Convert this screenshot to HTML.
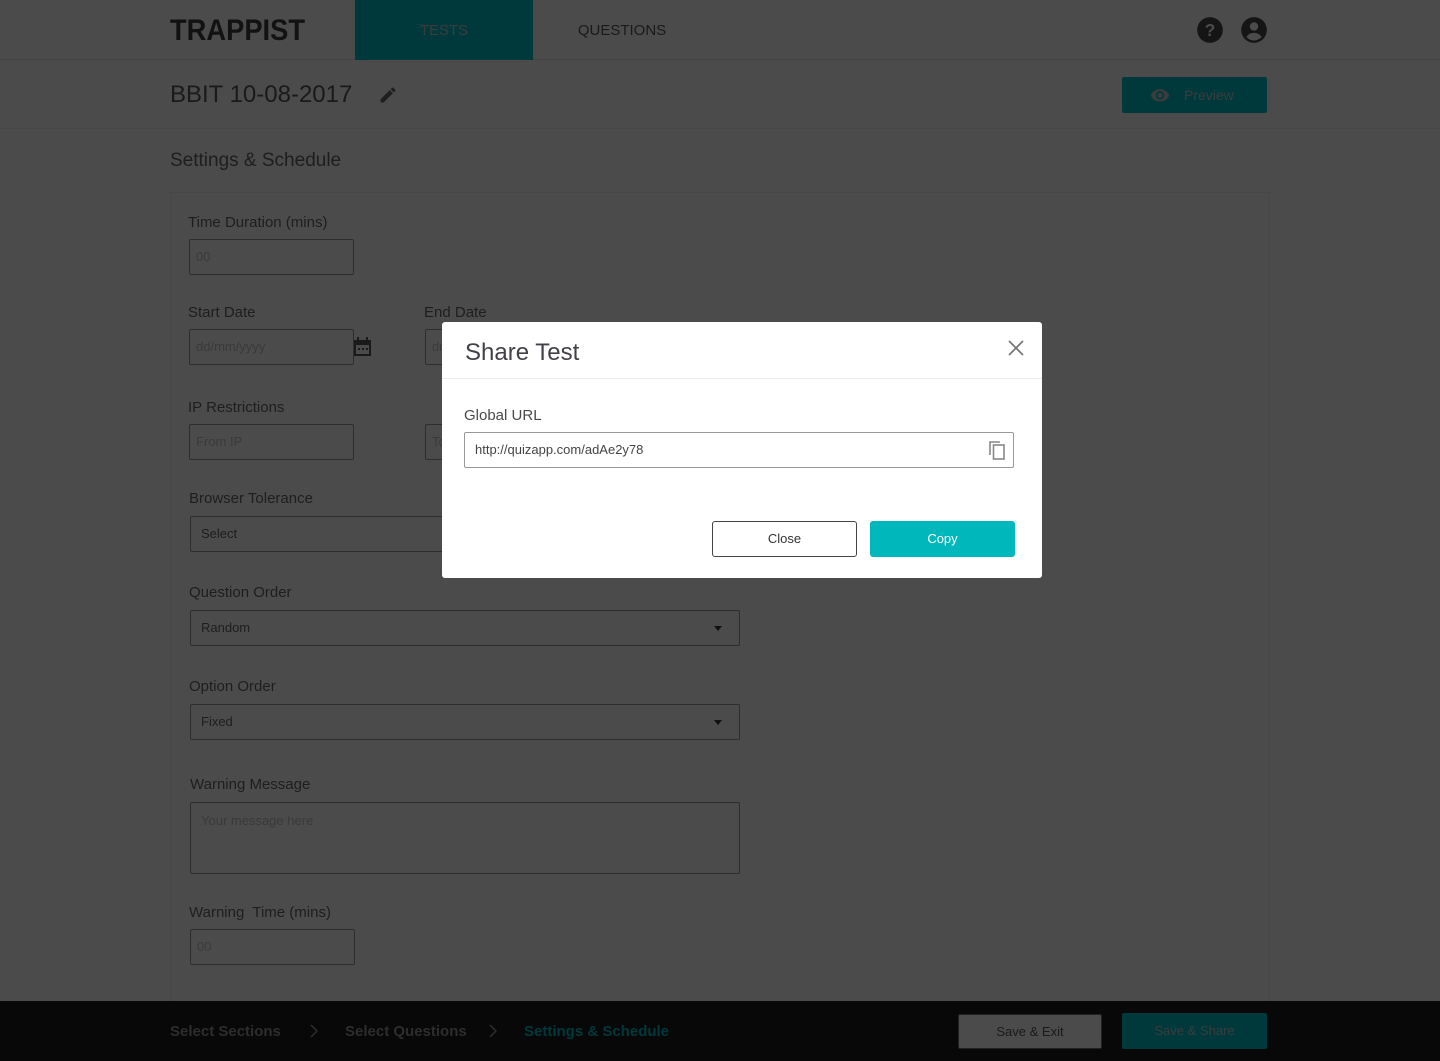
<!DOCTYPE html>
<html><head><meta charset="utf-8"><style>
*{box-sizing:border-box;margin:0;padding:0}
body{width:1440px;height:1061px;background:#4b4b4b;font-family:"Liberation Sans",sans-serif;position:relative;overflow:hidden;color:#1e1e1e}
.a{position:absolute}
.hdr{left:0;top:0;width:1440px;height:60px;border-bottom:1px solid #434343}
.logo{left:170px;top:14px;font-size:30px;font-weight:bold;color:#121212;transform:scaleX(0.91);transform-origin:left}
.tab{top:0;height:60px;line-height:62px;text-align:center;font-size:15px}
.lbl{font-size:15px;color:#1e1e1e;margin-top:2px}
.inp{border:1px solid #2e2e2e;border-radius:2px;height:36px;font-size:13px;color:#3a3a3a;padding-left:6px;line-height:34px}
.sel{border:1px solid #2e2e2e;border-radius:2px;height:36px;font-size:13px;color:#1e1e1e;padding-left:10px;line-height:34px;width:550px}
.sel:after{content:"";position:absolute;right:17px;top:15px;border:4px solid transparent;border-top:5px solid #111}
.modal{left:442px;top:322px;width:600px;height:256px;background:#fff;border-radius:3px}
.bc{top:1023px;font-size:15px;font-weight:bold;color:#2d2d2d}
</style></head><body>
<div class="a hdr"></div>
<div class="a logo">TRAPPIST</div>
<div class="a tab" style="left:355px;width:178px;background:#00393b;color:#3c3c3c">TESTS</div>
<div class="a tab" style="left:533px;width:178px;color:#1a1a1a">QUESTIONS</div>
<svg class="a" style="left:1196px;top:16px" width="28" height="28" viewBox="0 0 24 24"><circle cx="12" cy="12" r="11" fill="#151515"/><text x="12" y="17" text-anchor="middle" font-size="15" font-weight="bold" fill="#4b4b4b" font-family="Liberation Sans">?</text></svg>
<svg class="a" style="left:1240px;top:16px" width="28" height="28" viewBox="0 0 24 24"><circle cx="12" cy="12" r="11" fill="#151515"/><circle cx="12" cy="9" r="3.6" fill="#4b4b4b"/><path d="M5.5 18c1.5-2.5 4-3.5 6.5-3.5s5 1 6.5 3.5c-1.6 1.8-4 3-6.5 3s-4.9-1.2-6.5-3z" fill="#4b4b4b"/></svg>
<div class="a" style="left:0;top:128px;width:1440px;height:1px;background:#474747"></div>
<div class="a" style="left:170px;top:81px;font-size:24px;color:#1a1a1a">BBIT 10-08-2017</div>
<svg class="a" style="left:378px;top:85px" width="20" height="20" viewBox="0 0 24 24"><path d="M3 17.25V21h3.75L17.8 9.940l-3.75-3.75L3 17.25zM20.7 7.04a1 1 0 000-1.41l-2.34-2.34a1 1 0 00-1.41 0l-1.83 1.830 3.75 3.75 1.83-1.83z" fill="#1f1f1f"/></svg>
<div class="a" style="left:1122px;top:77px;width:145px;height:36px;background:#00393b;border-radius:2px"></div>
<svg class="a" style="left:1150px;top:87px" width="20" height="16" viewBox="0 0 24 18"><path d="M12 2C7 2 2.7 5.1 1 9.5 2.7 13.9 7 17 12 17s9.3-3.1 11-7.5C21.3 5.1 17 2 12 2zm0 12.5a5 5 0 110-10 5 5 0 010 10zm0-8a3 3 0 100 6 3 3 0 000-6z" fill="#3c3c3c"/></svg>
<div class="a" style="left:1184px;top:87px;font-size:14px;color:#3c3c3c">Preview</div>
<div class="a" style="left:170px;top:150px;font-size:19px;color:#1e1e1e">Settings &amp; Schedule</div>
<div class="a" style="left:170px;top:192px;width:1100px;height:830px;border:1px solid #474747"></div>
<div class="a lbl" style="left:188px;top:212px">Time Duration (mins)</div>
<div class="a inp" style="left:189px;top:239px;width:165px">00</div>
<div class="a lbl" style="left:188px;top:302px">Start Date</div>
<div class="a inp" style="left:189px;top:329px;width:165px">dd/mm/yyyy</div>
<svg class="a" style="left:353px;top:337px" width="19" height="20" viewBox="0 0 19 20"><rect x="1" y="3" width="17" height="16" fill="#1a1a1a"/><rect x="3" y="8" width="13" height="9" fill="#4b4b4b"/><rect x="4" y="0" width="2" height="4" fill="#1a1a1a"/><rect x="13" y="0" width="2" height="4" fill="#1a1a1a"/><rect x="5" y="11" width="2" height="2" fill="#1a1a1a"/><rect x="9" y="11" width="2" height="2" fill="#1a1a1a"/><rect x="13" y="11" width="2" height="2" fill="#1a1a1a"/></svg>
<div class="a lbl" style="left:424px;top:302px">End Date</div>
<div class="a inp" style="left:425px;top:329px;width:165px">dd</div>
<div class="a lbl" style="left:188px;top:397px">IP Restrictions</div>
<div class="a inp" style="left:189px;top:424px;width:165px">From IP</div>
<div class="a inp" style="left:425px;top:424px;width:165px">To</div>
<div class="a lbl" style="left:189px;top:488px">Browser Tolerance</div>
<div class="a sel" style="left:190px;top:516px">Select</div>
<div class="a lbl" style="left:189px;top:582px">Question Order</div>
<div class="a sel" style="left:190px;top:610px">Random</div>
<div class="a lbl" style="left:189px;top:676px">Option Order</div>
<div class="a sel" style="left:190px;top:704px">Fixed</div>
<div class="a lbl" style="left:190px;top:774px">Warning Message</div>
<div class="a inp" style="left:190px;top:802px;width:550px;height:72px;padding-left:10px;line-height:36px">Your message here</div>
<div class="a lbl" style="left:189px;top:902px">Warning&nbsp; Time (mins)</div>
<div class="a inp" style="left:190px;top:929px;width:165px">00</div>
<div class="a" style="left:0;top:1001px;width:1440px;height:60px;background:#080808"></div>
<div class="a bc" style="left:170px">Select Sections</div>
<svg class="a" style="left:310px;top:1024px" width="8" height="14" viewBox="0 0 8 14"><path d="M1 1l6 6-6 6" fill="none" stroke="#2d2d2d" stroke-width="1.5"/></svg>
<div class="a bc" style="left:345px">Select Questions</div>
<svg class="a" style="left:489px;top:1024px" width="8" height="14" viewBox="0 0 8 14"><path d="M1 1l6 6-6 6" fill="none" stroke="#2d2d2d" stroke-width="1.5"/></svg>
<div class="a bc" style="left:524px;color:#00393b">Settings &amp; Schedule</div>
<div class="a" style="left:958px;top:1014px;width:144px;height:35px;background:#4b4b4b;border:1px solid #222;border-radius:2px;text-align:center;line-height:33px;font-size:13px;color:#1a1a1a">Save &amp; Exit</div>
<div class="a" style="left:1122px;top:1013px;width:145px;height:36px;background:#00393b;border-radius:2px;text-align:center;line-height:36px;font-size:13px;color:#3c3c3c">Save &amp; Share</div>

<div class="a modal">
<div class="a" style="left:23px;top:17px;font-size:24px;color:#444047">Share Test</div>
<svg class="a" style="left:565px;top:17px" width="18" height="18" viewBox="0 0 18 18"><path d="M2 2L16 16M16 2L2 16" stroke="#777" stroke-width="1.8"/></svg>
<div class="a" style="left:0;top:56px;width:600px;height:1px;background:#ececec"></div>
<div class="a" style="left:22px;top:85px;font-size:15px;color:#4a4a4a">Global URL</div>
<div class="a" style="left:22px;top:110px;width:550px;height:36px;border:1px solid #999;border-radius:2px;font-size:13px;line-height:34px;padding-left:10px;color:#444">http://quizapp.com/adAe2y78</div>
<svg class="a" style="left:546px;top:118px" width="20" height="21" viewBox="0 0 20 21"><path d="M2 15V2h10" fill="none" stroke="#888" stroke-width="1.6"/><rect x="5.5" y="5" width="10.5" height="14" fill="none" stroke="#888" stroke-width="1.6"/></svg>
<div class="a" style="left:270px;top:199px;width:145px;height:36px;border:1px solid #444;border-radius:3px;text-align:center;line-height:34px;font-size:13px;color:#333">Close</div>
<div class="a" style="left:428px;top:199px;width:145px;height:36px;background:#00b8bc;border-radius:3px;text-align:center;line-height:36px;font-size:13px;color:#fff">Copy</div>
</div>
</body></html>
